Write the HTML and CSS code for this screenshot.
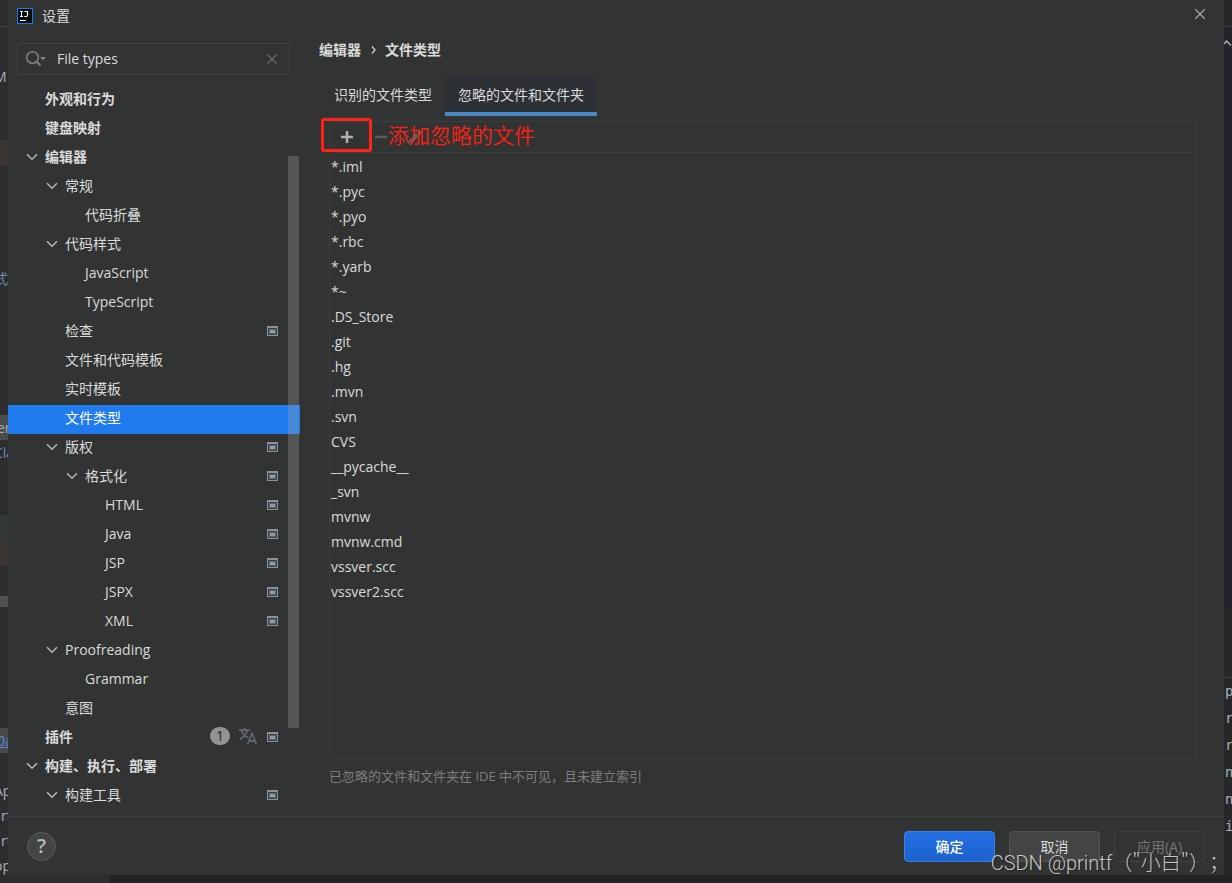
FILE: index.html
```html
<!DOCTYPE html>
<html lang="zh-CN">
<head>
<meta charset="utf-8">
<title>设置</title>
<link rel="stylesheet" href="styles.css">
</head>
<body>
<svg class="defs" aria-hidden="true">
  <symbol id="chev" viewBox="0 0 16 16"><path d="M3 5.2 8 10.2 13 5.2" fill="none" stroke="#b4b6b5" stroke-width="1.6"/></symbol>
  <symbol id="proj" viewBox="0 0 11 10"><path d="M0 0h11v10H0z" fill="#87939a"/><path d="M1 2h9v7H1z" fill="#3c4144"/><path d="M2 3h7v5H2z" fill="#59636a"/><path d="M3 4h5v3H3z" fill="#909ca3"/></symbol>
</svg>

<div class="ide ide-left" aria-hidden="true">
  <i class="block b1"></i><i class="block b2"></i><i class="block b3"></i><i class="block b4"></i><i class="block b5"></i><i class="block b6"></i>
  <span class="y67 far">M</span><span class="y269 far blue">式</span><span class="y419">en</span><span class="y444 far blue">Cla</span><span class="y731 link">0a</span><span class="y783 far">Ap</span><span class="y807 near">rt</span><span class="y832 near">rt</span><span class="y857 far">op</span>
</div>

<main class="dialog">
  <header class="titlebar">
    <svg class="logo" viewBox="0 0 16 16"><path d="M0 0h16v16H0z" fill="#087cfa"/><path d="M1 1h14v14H1z" fill="#090909"/><path d="M3 3.500h3M3 8.500h3M4.500 3.500v5M7.500 3.500H10.500v3.800q0 1.200-1.200 1.200H7.300M3 12.500h6" fill="none" stroke="#fff" stroke-width="1.100"/></svg>
    <h1>设置</h1>
    <button class="close" aria-label="关闭"><svg viewBox="0 0 10 10"><path d="M0 0 10 10M10 0 0 10" stroke="#b4b6b5" stroke-width="1.2"/></svg></button>
  </header>

  <div class="content">
    <nav class="side">
      <div class="search">
        <svg class="mag" viewBox="0 0 22 18"><circle cx="7.500" cy="7.500" r="5.800" fill="none" stroke="#7b8388" stroke-width="1.500"/><path d="m11.500 11.500 4 4" stroke="#7b8388" stroke-width="1.800"/><path d="M15 7h6l-3 3.500z" fill="#7b8388"/></svg>
        <input type="text" aria-label="搜索设置" value="File types">
        <button aria-label="清除"><svg viewBox="0 0 10 10"><path d="M.5.5l9 9M9.500.5l-9 9" stroke="#646b6f" stroke-width="1.200"/></svg></button>
      </div>
      <ul class="tree">
        <li class="top l1">外观和行为</li>
        <li class="top l1">键盘映射</li>
        <li class="top l1"><svg class="chev"><use href="#chev"/></svg>编辑器</li>
        <li class="l2"><svg class="chev"><use href="#chev"/></svg>常规</li>
        <li class="l3">代码折叠</li>
        <li class="l2"><svg class="chev"><use href="#chev"/></svg>代码样式</li>
        <li class="l3">JavaScript</li>
        <li class="l3">TypeScript</li>
        <li class="l2">检查<svg class="proj"><use href="#proj"/></svg></li>
        <li class="l2">文件和代码模板</li>
        <li class="l2">实时模板</li>
        <li class="l2 selected">文件类型</li>
        <li class="l2"><svg class="chev"><use href="#chev"/></svg>版权<svg class="proj"><use href="#proj"/></svg></li>
        <li class="l3"><svg class="chev"><use href="#chev"/></svg>格式化<svg class="proj"><use href="#proj"/></svg></li>
        <li class="l4">HTML<svg class="proj"><use href="#proj"/></svg></li>
        <li class="l4">Java<svg class="proj"><use href="#proj"/></svg></li>
        <li class="l4">JSP<svg class="proj"><use href="#proj"/></svg></li>
        <li class="l4">JSPX<svg class="proj"><use href="#proj"/></svg></li>
        <li class="l4">XML<svg class="proj"><use href="#proj"/></svg></li>
        <li class="l2"><svg class="chev"><use href="#chev"/></svg>Proofreading</li>
        <li class="l3">Grammar</li>
        <li class="l2">意图</li>
        <li class="top l1">插件<span class="marks"><span class="count">1</span><svg class="lang" viewBox="0 0 18 18"><path d="M0 3h11M5.500 0.500v2.500M2.500 3q1.500 5.500 7 8M8.500 3Q7 9 .8 12.500M8.500 17.500 13 6.500l4.500 11M10 14h6" fill="none" stroke="#5f666b" stroke-width="1.800"/></svg></span><svg class="proj"><use href="#proj"/></svg></li>
        <li class="top l1"><svg class="chev"><use href="#chev"/></svg>构建、执行、部署</li>
        <li class="l2"><svg class="chev"><use href="#chev"/></svg>构建工具<svg class="proj"><use href="#proj"/></svg></li>
      </ul>
      <i class="thumb"></i>
    </nav>

    <section class="page">
      <h2>编辑器<svg viewBox="0 0 6 10"><path d="m2 1.500 3 3.500-3 3.500" fill="none" stroke="#d0d2d1" stroke-width="1.300"/></svg>文件类型</h2>
      <div class="tabs" role="tablist">
        <button role="tab" aria-selected="false">识别的文件类型</button>
        <button role="tab" aria-selected="true">忽略的文件和文件夹</button>
      </div>
      <div class="panel">
        <div class="tools">
          <button aria-label="添加"><svg viewBox="0 0 14 14"><path d="M7 1v12M1 7h12" stroke="#b2b4b3" stroke-width="2.400"/></svg></button>
          <button aria-label="移除" disabled><svg viewBox="0 0 14 14"><path d="M1 7h12" stroke="#5d5f5e" stroke-width="2.400"/></svg></button>
          <button aria-label="编辑" disabled><svg viewBox="0 0 14 14"><path d="m0 14 1-4 7-7 3 3-7 7zM9 2l2-2 3 3-2 2z" fill="#5d5f5e"/></svg></button>
          <span class="frame"></span>
          <span class="note">添加忽略的文件</span>
        </div>
        <ul class="files">
          <li>*.iml</li><li>*.pyc</li><li>*.pyo</li><li>*.rbc</li><li>*.yarb</li><li>*~</li><li>.DS_Store</li><li>.git</li><li>.hg</li><li>.mvn</li><li>.svn</li><li>CVS</li><li>__pycache__</li><li>_svn</li><li>mvnw</li><li>mvnw.cmd</li><li>vssver.scc</li><li>vssver2.scc</li>
        </ul>
      </div>
      <p class="hint">已忽略的文件和文件夹在 IDE 中不可见，且未建立索引</p>
    </section>
  </div>

  <footer class="actions">
    <button class="help" aria-label="帮助">?</button>
    <button class="btn primary">确定</button>
    <button class="btn">取消</button>
    <button class="btn" disabled>应用(A)</button>
    <span class="watermark">CSDN @printf<span class="cjk">（"小白"）；</span></span>
  </footer>
</main>

<div class="ide ide-right" aria-hidden="true">
  <i class="block r1"></i><i class="block r2"></i>
  <svg class="caret" viewBox="0 0 8 6"><path d="m0 4 2.500-3L7 5.500" fill="none" stroke="#b4b6b5" stroke-width="1.400"/></svg>
  <span class="y681">p</span><span class="y708">r</span><span class="y735">r</span><span class="y762">n</span><span class="y789">n</span><span class="y816">i</span>
</div>
<div class="ide-bottom" aria-hidden="true"></div>
</body>
</html>
```
FILE: styles.css
```css
* { box-sizing: border-box; }
body {
  margin: 0;
  min-height: 100vh;
  display: grid;
  grid-template-columns: 8px minmax(0, 1fr) 8px;
  grid-template-rows: 1fr 8px;
  background: #2b2c2c;
  color: #d9dbda;
  font: 14px/20px "Open Sans", "Noto Sans CJK SC", sans-serif;
}
button, input { font: inherit; color: inherit; }
button { padding: 0; border: 0; background: none; }
ul, h1, h2, p { margin: 0; padding: 0; font-size: 14px; }
ul { list-style: none; }
svg { display: block; flex: none; }
.defs { position: absolute; width: 0; height: 0; }

/* Editor visible around the dialog */
.ide { position: relative; overflow: hidden; background: #2c2e2e; color: #a9b0b8; }
.ide-left { grid-row: span 2; }
.ide-right { background: #262729; font-family: "DejaVu Sans Mono", monospace; }
.ide-bottom { background: linear-gradient(90deg, #2c2e2e 102px, #232323 102px); grid-column: 2 / 4; }
.ide span { position: absolute; left: -3px; white-space: nowrap; }
.ide .far { left: -6px; }
.ide .near { left: 1px; }
.ide-right span { left: 1px; }
.ide .blue { color: #6a8bb5; }
.ide .link { color: #5588e0; text-decoration: underline; }
.block { position: absolute; left: 0; width: 8px; }
.b1 { top: 26px; height: 1px; background: #404241; }
.b2 { top: 140px; height: 25px; background: #3a3532; }
.b3 { top: 415px; height: 25px; background: #4a4c4b; }
.b4 { top: 515px; height: 50px; background: linear-gradient(#333a35 50%, #3a3532 50%); }
.b5 { top: 596px; height: 11px; background: #505251; }
.b6 { top: 728px; height: 25px; background: #494b4b; }
.r1 { top: 26px; height: 582px; background: #23242b; border-top: 1px solid #404241; }
.r2 { top: 677px; height: 1px; background: #404241; }
.caret { position: absolute; top: 40px; left: 0; width: 8px; height: 6px; }
.y67 { top: 67px; } .y269 { top: 269px; } .y419 { top: 418px; } .y444 { top: 443px; }
.y731 { top: 731px; } .y783 { top: 781px; } .y807 { top: 806px; } .y832 { top: 831px; } .y857 { top: 856px; }
.y681 { top: 681px; } .y708 { top: 708px; } .y735 { top: 735px; } .y762 { top: 762px; } .y789 { top: 789px; } .y816 { top: 816px; }

.dialog { display: flex; flex-direction: column; background: #323433; }
.titlebar { display: flex; align-items: center; gap: 9px; height: 32px; padding: 0 19px 0 9px; }
.titlebar h1 { font-weight: 400; }
.logo { width: 16px; height: 16px; }
.close { margin-left: auto; padding-bottom: 4px; }
.close svg, .search button svg { width: 10px; height: 10px; }

.content { flex: 1; display: grid; grid-template-columns: 292px minmax(0, 1fr); }
.side { position: relative; padding-top: 11px; }
.search { display: flex; align-items: center; height: 32px; margin: 0 10px 11px 9px; padding: 0 12px 0 7px; border: 1px solid #434544; border-radius: 3px; }
.mag { width: 22px; height: 18px; }
.search input { flex: 1; min-width: 0; margin-left: 10px; padding: 0; border: 0; outline: 0; background: none; }
.tree li { display: flex; align-items: center; height: 29px; padding-right: 22px; padding-bottom: 4px; }
.top { font-weight: 700; }
.tree .l1 { padding-left: 37px; }
.tree .l2 { padding-left: 57px; }
.tree .l3 { padding-left: 77px; }
.tree .l4 { padding-left: 97px; }
.tree .selected { background: #1f7bee; color: #fff; }
.chev { width: 16px; height: 16px; margin: 0 5px 0 -21px; }
.proj { width: 11px; height: 10px; margin-left: auto; }
.marks { display: flex; align-items: center; gap: 9px; margin-left: auto; padding-bottom: 2px; }
.marks + .proj { margin-left: 10px; }
.count { width: 20px; height: 18px; border-radius: 9px; background: #929493; color: #222; font-weight: 400; line-height: 18px; text-align: center; }
.lang { width: 18px; height: 18px; }
.thumb { position: absolute; top: 124px; right: 1px; width: 11px; height: 572px; background: rgba(164, 166, 165, .3); }

.page { display: flex; flex-direction: column; padding: 8px 28px 31px 19px; }
.page h2 { display: flex; align-items: center; gap: 9px; height: 20px; font-weight: 700; }
.page h2 svg { width: 6px; height: 10px; }
.tabs { display: flex; height: 40px; margin: 16px 0 5px 2px; }
.tabs button { padding: 2px 13px 0; border-bottom: 4px solid transparent; }
.tabs [aria-selected=true] { background: #2d3034; border-color: #4a88c7; }
.panel { flex: 1; margin-left: 10px; border: 1px solid #3b3d3c; }
.tools { position: relative; display: flex; align-items: center; gap: 20px; height: 31px; padding-left: 10px; border-bottom: 1px solid #3b3d3c; }
.tools svg { width: 14px; height: 14px; }
.frame { position: absolute; left: -9px; top: -4px; width: 51px; height: 34px; border: 3px solid #ff2316; border-radius: 3px; }
.note { position: absolute; left: 58px; top: -2px; color: #ff1f12; font: 21px/28px "Noto Sans CJK SC", sans-serif; font-weight: 350; }
.files { padding-top: 1px; }
.files li { height: 25px; line-height: 25px; padding-left: 1px; }
.hint { margin-top: 8px; margin-left: 10px; color: #7c7e7d; font-size: 13px; line-height: 18px; }

.actions { position: relative; display: flex; align-items: center; gap: 14px; height: 59px; padding: 0 19px; border-top: 1px solid #3b3d3c; }
.help { width: 29px; height: 29px; margin-right: auto; border: 1px solid #5b5d5c; border-radius: 50%; background: #434544; color: #b8bab9; font-size: 20px; font-weight: 600; line-height: 26px; }
.btn { width: 91px; height: 31px; padding-top: 2px; border: 1px solid #535554; border-radius: 4px; background: #434444; }
.btn.primary { border-color: #3b80e6; background: linear-gradient(#216fe4, #1e62cd); color: #fff; font-weight: 500; }
.btn:disabled { border-color: #3f4140; background: none; color: #747675; }
.watermark { position: absolute; right: -5px; bottom: 0; color: #c6c8c7; font: 300 20px/24px Roboto, sans-serif; text-spacing-trim: space-all; text-shadow: 1px 1px 1px #222; white-space: nowrap; }
.cjk { font-family: "Noto Sans CJK SC", sans-serif; }
```
